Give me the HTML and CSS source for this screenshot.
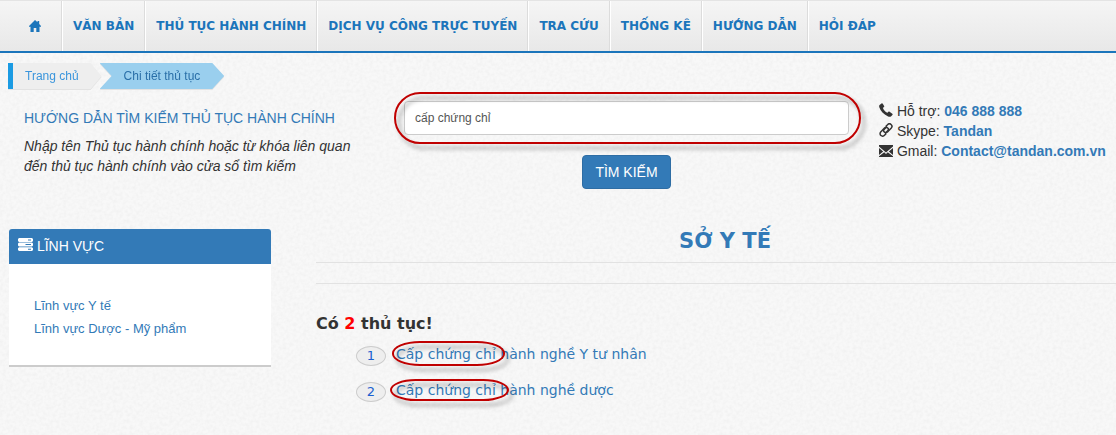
FILE: index.html
```
<!DOCTYPE html>
<html lang="vi">
<head>
    <meta charset="UTF-8">
    <meta name="viewport" content="width=device-width, initial-scale=1.0">
    <title>Chi tiết thủ tục</title>
    <link rel="stylesheet" href="styles.css">
</head>
<body>
    <nav class="navbar">
        <a class="nav-item nav-home" href="#" aria-label="Trang chủ">
            <svg width="12" height="12" viewBox="0 0 12 12"><path fill="currentColor" d="M6 0 8.500 2.300V1h1.700v3L12 6v.7h-1.500V12H7.300V8H4.700v4H1.500V6.700H0V6z"/></svg>
        </a>
        <a class="nav-item" href="#">VĂN BẢN</a>
        <a class="nav-item" href="#">THỦ TỤC HÀNH CHÍNH</a>
        <a class="nav-item" href="#">DỊCH VỤ CÔNG TRỰC TUYẾN</a>
        <a class="nav-item" href="#">TRA CỨU</a>
        <a class="nav-item" href="#">THỐNG KÊ</a>
        <a class="nav-item" href="#">HƯỚNG DẪN</a>
        <a class="nav-item" href="#">HỎI ĐÁP</a>
    </nav>

    <div class="breadcrumb">
        <a class="crumb" href="#">Trang chủ</a>
        <a class="crumb crumb-active" href="#">Chi tiết thủ tục</a>
    </div>

    <div class="search-row">
        <div class="guide">
            <a class="guide-title" href="#">HƯỚNG DẪN TÌM KIẾM THỦ TỤC HÀNH CHÍNH</a>
            <p class="guide-text">Nhập tên Thủ tục hành chính hoặc từ khóa liên quan đến thủ tục hành chính vào cửa sổ tìm kiếm</p>
        </div>
        <form class="search">
            <div class="search-box">
                <input class="search-input" type="text" value="cấp chứng chỉ" aria-label="Từ khóa">
            </div>
            <button class="search-button" type="button">TÌM KIẾM</button>
        </form>
        <div class="contact">
            <div class="contact-line">
                <svg width="14" height="14" viewBox="0 0 14 14"><path fill="currentColor" d="M.6 1.900 2.500.4c.5-.4 1-.2 1.300.3l1.300 2.200c.3.5.2.900-.2 1.200l-1 .8c.8 2 2.300 3.700 4.500 4.900l1-1c.4-.4.8-.4 1.200-.1l2.700 2c.5.4.5.800.1 1.200l-1.500 1.500c-.7.700-2 .5-3.200-.1C4.700 11.200 1.500 8 .3 4.200.1 3.300 0 2.400.6 1.900z"/></svg>
                Hỗ trợ: <a href="#">046 888 888</a>
            </div>
            <div class="contact-line">
                <svg width="14" height="14" viewBox="0 0 14 14"><g fill="none" stroke="currentColor" stroke-width="1.500" stroke-linecap="round"><path d="M6.800 11 5.500 12.300a2.500 2.500 0 0 1-3.800-3.300L5.500 5a2.500 2.500 0 0 1 3.800.6c.3.800 0 1.600-.6 2.200L6.500 10"/><path d="M7.200 3 8.500 1.700a2.500 2.500 0 0 1 3.800 3.300L8.500 9a2.500 2.500 0 0 1-3.800-.6c-.3-.8 0-1.600.6-2.200L7.500 4"/></g></svg>
                Skype: <a href="#">Tandan</a>
            </div>
            <div class="contact-line">
                <svg width="14" height="12" viewBox="0 0 14 12"><path fill="currentColor" d="M0 0h14v1.500L7 7.500 0 1.500zM0 3l4.200 3.600L0 10zM14 3v7L9.800 6.600zM0 12v-.7l5.200-4L7 9l1.800-1.700 5.200 4v.7z"/></svg>
                Gmail: <a href="#">Contact@tandan.com.vn</a>
            </div>
        </div>
    </div>

    <div class="main">
        <aside class="panel">
            <div class="panel-heading">
                <svg width="15" height="13" viewBox="0 0 15 13"><path fill="currentColor" fill-rule="evenodd" d="M1 0h13l1 1v2l-1 1H1L0 3V1zM10 1.500v1h3v-1zM1 4.600h13l1 1v2l-1 1H1l-1-1v-2zM7.500 6v1H13V6zM1 9.200h13l1 1V12l-1 1H1l-1-1v-1.800zM10 10.700v1h3v-1z"/></svg>
                LĨNH VỰC
            </div>
            <div class="panel-body">
                <a href="#">Lĩnh vực Y tế</a>
                <a href="#">Lĩnh vực Dược - Mỹ phẩm</a>
            </div>
        </aside>
        <section class="content">
            <h1>SỞ Y TẾ</h1>
            <hr>
            <hr>
            <h2>Có <span class="count">2</span> thủ tục!</h2>
            <ol class="results">
                <li><span class="number">1</span><a href="#"><span class="match">Cấp chứng chỉ</span> hành nghề Y tư nhân</a></li>
                <li><span class="number">2</span><a href="#"><span class="match match-wide">Cấp chứng chỉ</span> hành nghề dược</a></li>
            </ol>
        </section>
    </div>
</body>
</html>
```
FILE: styles.css
```
* {
    box-sizing: border-box;
}

body {
    margin: 0;
    background-color: #f8f8f8;
    background-image: url("data:image/svg+xml,%3Csvg xmlns='http://www.w3.org/2000/svg' width='200' height='200'%3E%3Cfilter id='n'%3E%3CfeTurbulence type='fractalNoise' baseFrequency='.3' numOctaves='2' stitchTiles='stitch'/%3E%3CfeColorMatrix values='0 0 0 0 0 0 0 0 0 0 0 0 0 0 0 .05 0 0 0 -.017'/%3E%3C/filter%3E%3Crect width='200' height='200' filter='url(%23n)'/%3E%3C/svg%3E");
    font-family: "Liberation Sans", Arial, sans-serif;
    font-size: 14px;
    line-height: 20px;
    color: #333;
}

a {
    color: #337ab7;
    text-decoration: none;
}

.navbar {
    display: flex;
    height: 53px;
    border-top: 1px solid #e4e4e4;
    border-bottom: 2px solid #1b75bb;
    background: linear-gradient(#f5f5f5, #e8e8e8);
}

.nav-item {
    display: flex;
    align-items: center;
    padding: 0 10px;
    border-left: 1px solid #fff;
    border-right: 1px solid #dcdcdc;
    color: #1b75bb;
    font-family: "DejaVu Sans", Verdana, sans-serif;
    font-size: 12px;
    font-weight: bold;
    white-space: nowrap;
}

.nav-home {
    padding: 0 20px 0 29px;
    border-left: none;
}

.nav-item:last-child {
    border-right: none;
}

.breadcrumb {
    display: flex;
    padding: 10px 8px 0;
    font-size: 12px;
    line-height: 26px;
    filter: drop-shadow(0 1px 0 #e2e2e2);
}

.crumb {
    padding: 0 23px 0 12px;
    border-left: 5px solid #1b9be3;
    background: #eee;
    color: #3a95dc;
    clip-path: polygon(0 0, calc(100% - 11px) 0, 100% 50%, calc(100% - 11px) 100%, 0 100%);
}

.crumb-active {
    margin-left: -2px;
    padding: 0 24px;
    border-left: none;
    background: #9acfee;
    color: #2a6fa8;
    clip-path: polygon(0 0, calc(100% - 12px) 0, 100% 50%, calc(100% - 12px) 100%, 0 100%, 12px 50%);
}

.search-row {
    display: grid;
    grid-template-columns: 350fr 445fr 237fr;
    column-gap: 30px;
    padding: 12px 0 0 24px;
}

.guide {
    padding-top: 7px;
}

.guide-text {
    margin: 8px 0 0;
    font-style: italic;
}

.search {
    text-align: center;
}

.search-box {
    position: relative;
}

/* red marker round the search field */
.search-box::after {
    content: "";
    position: absolute;
    inset: -9px -12px -9px -10px;
    border: 2px solid #c00000;
    border-radius: 26px;
    filter: drop-shadow(4px 5px 2px rgba(0, 0, 0, 0.35));
    pointer-events: none;
}

.search-input {
    display: block;
    width: 100%;
    height: 34px;
    padding: 0 10px;
    border: 1px solid #ccc;
    border-radius: 4px;
    background: #fff;
    color: #555;
    font-family: inherit;
    font-size: 12px;
}

.search-button {
    height: 34px;
    margin-top: 20px;
    padding: 0 12px;
    border: 1px solid #2e6da4;
    border-radius: 4px;
    background: #337ab7;
    color: #fff;
    font-family: inherit;
    font-size: 14px;
}

.contact-line {
    white-space: nowrap;
}

.contact-line svg {
    vertical-align: -1px;
}

.contact-line a {
    font-weight: bold;
}

.main {
    display: grid;
    grid-template-columns: 262fr 800fr;
    column-gap: 45px;
    padding: 40px 0 24px 9px;
    align-items: start;
}

.panel {
    border-bottom: 2px solid #ccc;
    background: #fff;
    border-radius: 3px 3px 0 0;
}

.panel-heading {
    height: 35px;
    padding: 7px 9px;
    border-radius: 3px 3px 0 0;
    background: #337ab7;
    color: #fff;
}

.panel-body {
    display: flex;
    flex-direction: column;
    padding: 30px 25px 25px;
    font-size: 13px;
    line-height: 23px;
}

.content {
    font-family: "DejaVu Sans", Verdana, sans-serif;
}

.content h1 {
    margin: 0 0 9px;
    padding-left: 18px;
    color: #337ab7;
    font-size: 21px;
    line-height: 24px;
    text-align: center;
}

.content hr {
    margin: 0 0 20px;
    border: none;
    border-top: 1px solid #e2e2e2;
}

.content h2 {
    margin: 30px 0 10px;
    font-size: 16px;
    line-height: 20px;
}

.count {
    color: #f00;
}

.results {
    display: flex;
    flex-direction: column;
    gap: 14px;
    margin: 0;
    padding: 0 0 0 40px;
    list-style: none;
    font-size: 14px;
}

.results li {
    display: flex;
    gap: 10px;
}

.number {
    width: 30px;
    height: 20px;
    margin-top: 2px;
    border: 1px solid #ccc;
    border-radius: 50%;
    background: #eee;
    color: #1a5fd0;
    font-size: 13px;
    line-height: 18px;
    text-align: center;
}

/* red marker round the matched words */
.match {
    position: relative;
}

.match::after {
    content: "";
    position: absolute;
    inset: -5px -9px -4px -4px;
    border: 2px solid #c00000;
    border-radius: 28px / 12px;
    filter: drop-shadow(4px 5px 2px rgba(0, 0, 0, 0.35));
    pointer-events: none;
}

.match-wide::after {
    inset: -3px -13px -3px -6px;
}
```
